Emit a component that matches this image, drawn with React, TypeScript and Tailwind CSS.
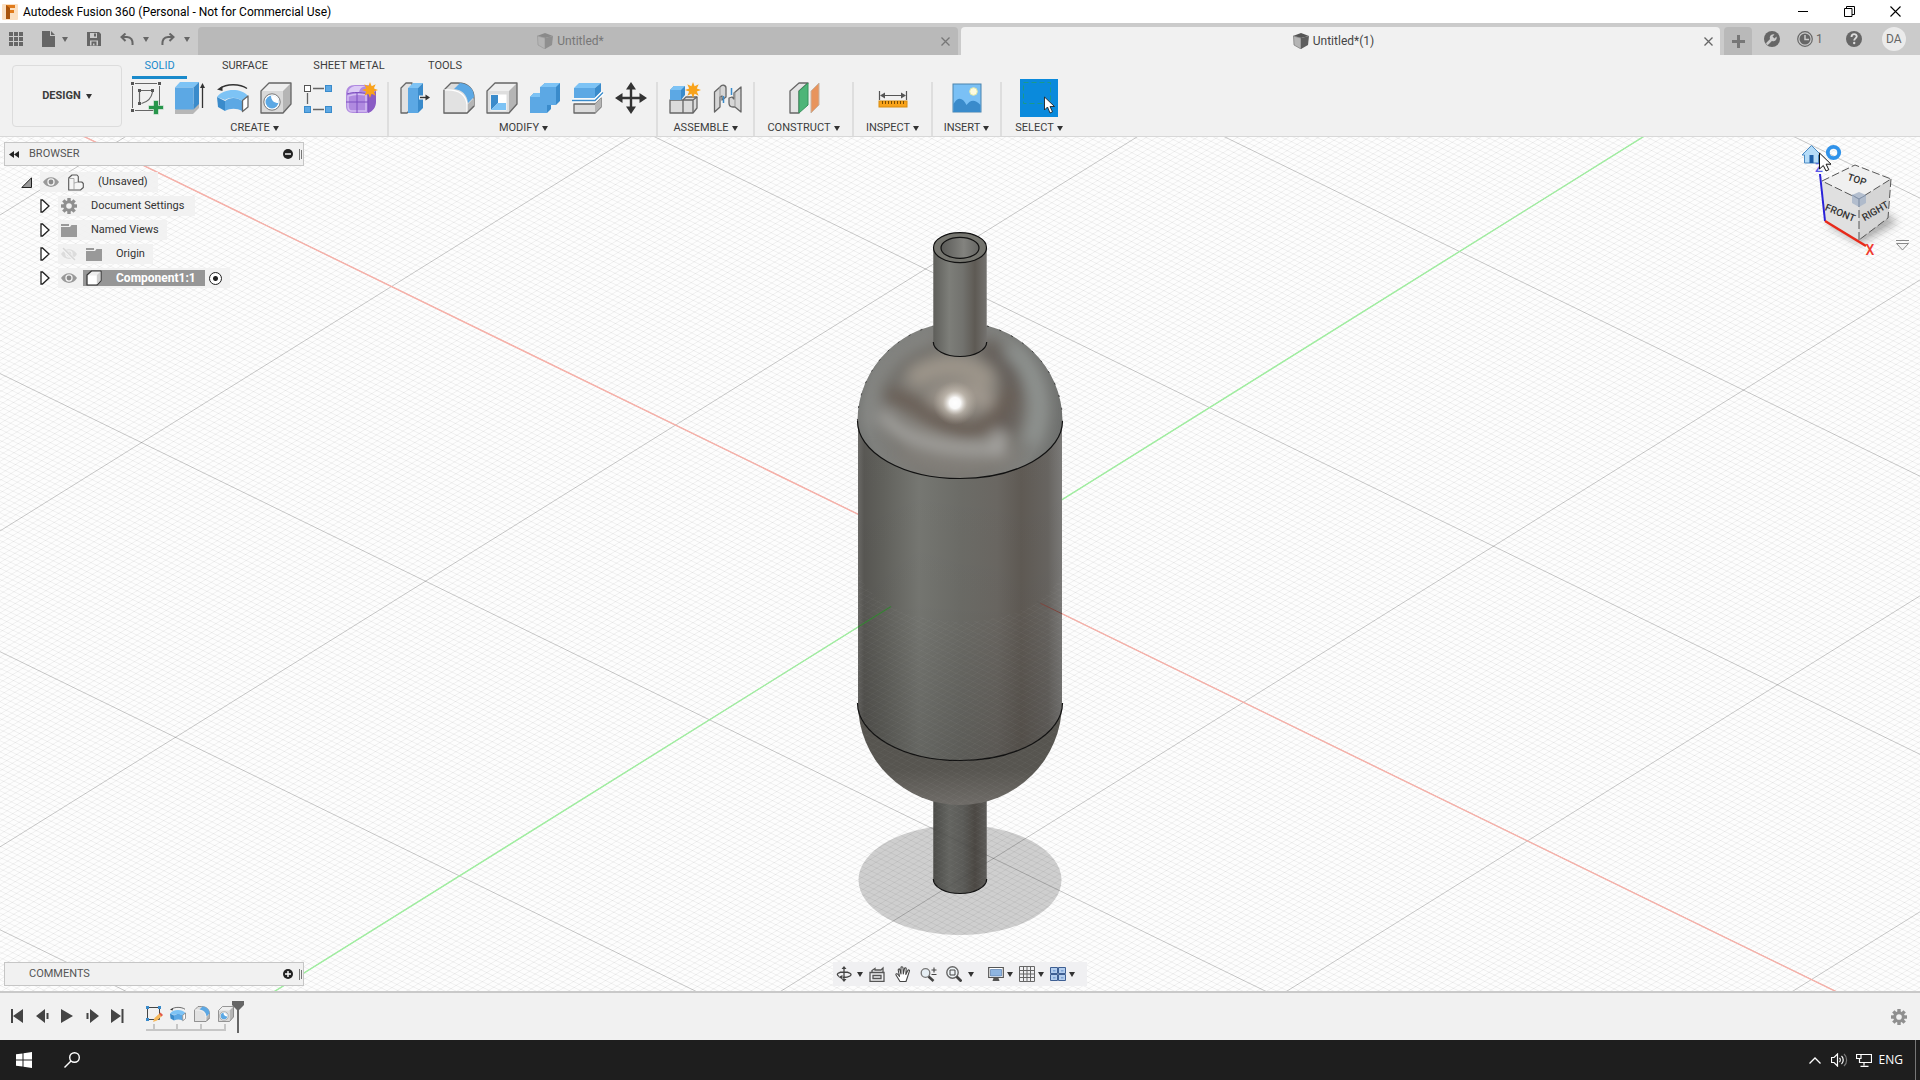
import React, { useState } from 'react';

// Ground grid: origin and the two axis vectors of one major cell
const ORIGIN = { x: 959.5, y: 563.7 };
const RED = { x: 284, y: 138.6 };
const GREEN = { x: 250, y: -156.1 };
const REACH = 7;

const gridPath = (step: number) => {
  let d = '';
  const n = Math.round(REACH / step);
  for (let k = -n; k <= n; k++) {
    const t = k * step;
    const rx = ORIGIN.x + t * RED.x;
    const ry = ORIGIN.y + t * RED.y;
    d += `M${(rx - REACH * GREEN.x).toFixed(1)} ${(ry - REACH * GREEN.y).toFixed(1)}L${(rx + REACH * GREEN.x).toFixed(1)} ${(ry + REACH * GREEN.y).toFixed(1)}`;
    const gx = ORIGIN.x + t * GREEN.x;
    const gy = ORIGIN.y + t * GREEN.y;
    d += `M${(gx - REACH * RED.x).toFixed(1)} ${(gy - REACH * RED.y).toFixed(1)}L${(gx + REACH * RED.x).toFixed(1)} ${(gy + REACH * RED.y).toFixed(1)}`;
  }
  return d;
};

const minorGrid = gridPath(0.02);
const majorGrid = gridPath(1);

const Caret = ({ className = 'text-[#333]' }: { className?: string }) => (
  <svg className={`w-[6px] h-[5px] shrink-0 ${className}`} viewBox="0 0 6 5" fill="currentColor">
    <path d="M0 0h6L3 5z" />
  </svg>
);

/* ---------- ribbon icons, all on a 32px grid ---------- */

const outline = { stroke: '#666', strokeWidth: 1.3, strokeLinejoin: 'round' as const };

const SketchIcon = () => (
  <>
    <rect x="1.500" y="1.500" width="27" height="27" fill="none" stroke="#666" strokeDasharray="22 5" strokeDashoffset="-2.500" />
    <g fill="#555">
      <rect x="0" y="0" width="3" height="3" /><rect x="27" y="0" width="3" height="3" /><rect x="0" y="27" width="3" height="3" />
      <rect x="7" y="7" width="3" height="3" /><rect x="20" y="7" width="3" height="3" /><rect x="7" y="20" width="3" height="3" />
    </g>
    <path d="M10 8.500h10M8.500 10v10M21.500 10c-1 6-5 10-11 11.500" fill="none" stroke="#666" strokeWidth="1.200" />
    <path d="M22.500 18.500h5v5h5v4h-5v5h-5v-5h-5v-4h5z" fill="#27964b" stroke="#f1f1f1" strokeWidth=".6" />
  </>
);

const ExtrudeIcon = () => (
  <>
    <path d="M1 28l6-6h18v4l-6 6H1z" fill="#b7b7b7" />
    <path d="M1 5.500L6 0h19l-5.500 5.500z" fill="#7dc3f5" />
    <path d="M19.500 5.500L25 0v22l-5.500 5.500z" fill="#3a8bcb" />
    <path d="M1 5.500h18.500v22H1z" fill="#5ca8e4" />
    <path d="M28.500 26V4" stroke="#333" strokeWidth="1.300" />
    <path d="M28.500 1l2.500 5h-5z" fill="#333" />
  </>
);

const RevolveIcon = () => (
  <>
    <path d="M3 6.500C9 1.500 23 1.500 30 6.500" fill="none" stroke="#333" strokeWidth="1.400" />
    <path d="M0 7.500l5.500-3.500v5z" fill="#333" />
    <path d="M0 15C7 6 24 6 31 14l-6 5C20 15 13 15 8 18z" fill="#7dc3f5" />
    <path d="M0 15l8 4v10l-7-4z" fill="#3a8bcb" />
    <path d="M8 19c5-4 12-4 17 0v10c-5-3-12-3-17 0z" fill="#5ca8e4" />
    <path d="M25.500 18.500l5.500-4.500v11l-5.500 4.500z" fill="#fff" {...outline} />
  </>
);

const HoleIcon = () => (
  <>
    <path d="M1 9l8-8h22l-8 8z" fill="#efefef" />
    <path d="M23 9l8-8v21l-8 9z" fill="#b5b5b5" />
    <path d="M1 9h22v22H1z" fill="#d9d9d9" />
    <path d="M1 9l8-8h22v21l-8 9H1z" fill="none" {...outline} />
    <circle cx="12" cy="20" r="8.200" fill="#fff" stroke="#777" />
    <circle cx="12" cy="20" r="6.500" fill="#5ca8e4" />
    <path d="M11 13.500c0 5 3 7.500 7.500 7.500A6.500 6.500 0 0 0 11 13.500z" fill="#fff" />
  </>
);

const PatternIcon = () => (
  <>
    <path d="M10 6.500h11M4.500 11v11M10 27.500h11" stroke="#666" strokeWidth="1.300" />
    <rect x="1.500" y="3.500" width="6" height="6" fill="#fff" stroke="#555" />
    <g fill="#5ca8e4" stroke="#3a8bcb">
      <rect x="22.500" y="3.500" width="6" height="6" /><rect x="1.500" y="24.500" width="6" height="6" /><rect x="22.500" y="24.500" width="6" height="6" />
    </g>
  </>
);

const Spark = ({ x, y }: { x: number; y: number }) => (
  <g transform={`translate(${x} ${y})`} fill="#f9a31a">
    <path d="M0-8l1.600 4.200L5.700-5.700 3.800-1.600 8 0 3.800 1.600 5.700 5.700 1.600 3.800 0 8-1.600 3.800-5.700 5.700-3.800 1.600-8 0-3.800-1.600-5.700-5.700-1.600-3.800z" />
  </g>
);

const FormIcon = () => (
  <>
    <path d="M0 12c0-6 3-9 9-9h12c6 0 8 3 8 8v10c0 6-4 10-9 10H7c-5 0-7-3-7-7z" fill="#b08ae0" />
    <path d="M22 13c5-1 8-3 8-6v13c0 5-3 9-8 11z" fill="#8a5cc4" />
    <path d="M2 11c1-5 4-7 8-7h10c-5 1-6 3-7 6-4 0-8 0-11 2z" fill="#dccaf5" />
    <path d="M2 14c6-2 12-2 18-1v16H6c-3 0-4-2-4-5z" fill="none" stroke="#d4bff2" strokeWidth="1.500" />
    <path d="M0 20h22M11 11v20M22 12v18M1 12c6-2 14-2 21 0" fill="none" stroke="#7d4fc0" />
    <Spark x={24} y={8} />
  </>
);

const PressPullIcon = () => (
  <>
    <path d="M1 6l5-5h6v25l-5 5H1z" fill="#e2e2e2" {...outline} />
    <path d="M8 6l5-5h10l-5 5z" fill="#7dc3f5" />
    <path d="M18 6l5-5v25l-5 5z" fill="#3a8bcb" />
    <path d="M8 6h10v25H8z" fill="#5ca8e4" />
    <path d="M19 15.500h7" stroke="#f1f1f1" strokeWidth="4" />
    <path d="M20 15.500h7" stroke="#333" strokeWidth="1.400" />
    <path d="M30 15.500l-4.500-3v6z" fill="#333" />
  </>
);

const FilletIcon = () => (
  <>
    <path d="M1 8l7-7h7c10 0 16 6 16 15v8l-7 7H1z" fill="#dcdcdc" {...outline} />
    <path d="M24 23l7-7v8l-7 7z" fill="#b5b5b5" />
    <path d="M11 7l6-6c9 1 14 6 14 14l-6 6C24 12 19 8 11 7z" fill="#5ca8e4" />
    <path d="M1 8c14-1 22 3 23 15v8H1z" fill="#e2e2e2" stroke="#fff" strokeWidth="1.200" />
    <path d="M1 8v23h23l7-7" fill="none" {...outline} />
  </>
);

const ShellIcon = () => (
  <>
    <path d="M1 9l8-8h22l-8 8z" fill="#efefef" />
    <path d="M23 9l8-8v21l-8 9z" fill="#b5b5b5" />
    <path d="M1 9h22v22H1z" fill="#dedede" />
    <path d="M1 9l8-8h22v21l-8 9H1z" fill="none" {...outline} />
    <rect x="4.500" y="12.500" width="16" height="16" fill="#fff" />
    <path d="M5 13h7v8l-7 7z" fill="#3a8bcb" />
    <path d="M5 28l7-7h8v7z" fill="#7dc3f5" />
  </>
);

const CombineIcon = () => (
  <>
    <path d="M1 15l4-4h7V5l4-4h15v18l-4 4h-5v4l-4 4H1z" fill="#3a8bcb" />
    <path d="M1 15h10V5h16v18h-9v8H1z" fill="#5ca8e4" />
    <path d="M11 5l5-4h15l-4 4zM1 15l4-4h6v4z" fill="#7dc3f5" />
  </>
);

const SplitIcon = () => (
  <>
    <path d="M2 6l5-5h22l-6 5z" fill="#7dc3f5" />
    <path d="M23 6l6-5v9l-6 6z" fill="#3a8bcb" />
    <path d="M2 6h21v10H2z" fill="#5ca8e4" />
    <path d="M2 22h21l6-6v9l-6 6H2z" fill="#dcdcdc" {...outline} />
    <path d="M23 22l6-6v9l-6 6z" fill="#b5b5b5" />
    <path d="M0 18.500h23l8-8" fill="none" stroke="#fff" strokeWidth="4" />
    <path d="M0 18.500h23l8-8" fill="none" stroke="#3a8bcb" strokeWidth="1.300" />
  </>
);

const MoveIcon = () => (
  <>
    <path d="M16 4v24M4 16h24" stroke="#333" strokeWidth="2.400" />
    <path d="M16 0l5 7.500H11zM16 32l5-7.500H11zM0 16l7.500-5v10zM32 16l-7.500-5v10z" fill="#333" />
  </>
);

const ComponentIcon = () => (
  <>
    <path d="M2 18h13v13H2zM15 18l3-3h11v11l-4 5H15z" fill="#dcdcdc" {...outline} />
    <path d="M15 18h10l4-3M25 18v13" fill="none" {...outline} />
    <path d="M2 8l4-4h11v9l-4 5H2z" fill="#3a8bcb" />
    <path d="M2 8h11v10H2z" fill="#5ca8e4" />
    <path d="M2 8l4-4h11l-4 4z" fill="#7dc3f5" />
    <Spark x={25} y={8} />
  </>
);

const JointIcon = () => (
  <>
    <path d="M2.500 10L8 5c2-3 6-2 6 1v9l-4 3v-4l-2 1v10l-5.500 5z" fill="#d6d6d6" {...outline} />
    <path d="M8 5v10" stroke="#999" />
    <path d="M29 5v25l-6-5h-2c-3 0-4-1-4-4v-5l3-1 2 2v-6z" fill="#d6d6d6" {...outline} />
    <path d="M23 10v14" stroke="#999" />
    <path d="M19.500 6v7M11.500 14v7" stroke="#3a8bcb" strokeWidth="1.500" />
  </>
);

const PlaneIcon = () => (
  <>
    <path d="M2 9l9-8h9l-9 8v22H2z" fill="#e4e4e4" {...outline} />
    <path d="M11 9l9-8v22l-9 8z" fill="#4db578" stroke="#37935c" />
    <path d="M23 9l8-8v22l-8 8z" fill="#e8945c" stroke="#c9b29f" />
  </>
);

const MeasureIcon = () => (
  <>
    <path d="M2.500 9v9M29.500 9v9M4 13.500h24" stroke="#555" strokeWidth="1.200" />
    <path d="M3 13.500l5-3v6zM29 13.500l-5-3v6z" fill="#555" />
    <rect x="2" y="19" width="28" height="6" fill="#f9a31a" stroke="#d88b0d" />
    <path d="M5.500 19v3M8.500 19v3M11.500 19v3M14.500 19v3M17.500 19v3M20.500 19v3M23.500 19v3M26.500 19v3" stroke="#7a4c00" />
  </>
);

const InsertIcon = () => (
  <>
    <rect x="2" y="2" width="28" height="28" fill="#7ac0f5" stroke="#4b84ae" />
    <path d="M2.500 22c4-7 9-7 13 1 4-5 8-6 14 0v7h-27z" fill="#3a8bcb" />
    <circle cx="22.500" cy="9.500" r="3.800" fill="#fdfbe0" stroke="#e4e9a8" />
  </>
);

const Icon32 = ({ children }: { children: React.ReactNode }) => (
  <svg className="w-8 h-8 overflow-visible" viewBox="0 0 32 32">{children}</svg>
);

const groups = [
  { label: 'CREATE', width: 'w-[267px]', icons: [SketchIcon, ExtrudeIcon, RevolveIcon, HoleIcon, PatternIcon, FormIcon] },
  { label: 'MODIFY', width: 'w-[269px] pl-[2px]', icons: [PressPullIcon, FilletIcon, ShellIcon, CombineIcon, SplitIcon, MoveIcon] },
  { label: 'ASSEMBLE', width: 'w-[97px]', icons: [ComponentIcon, JointIcon] },
  { label: 'CONSTRUCT', width: 'w-[99px]', icons: [PlaneIcon] },
  { label: 'INSPECT', width: 'w-[79px]', icons: [MeasureIcon] },
  { label: 'INSERT', width: 'w-[69px]', icons: [InsertIcon] },
];

const TitleBar = () => (
  <header className="h-[23px] bg-white flex items-center pl-[2px] text-black shrink-0">
    <svg className="w-4 h-4 mr-[5px]" viewBox="0 0 16 16">
      <rect width="16" height="16" rx="1" fill="#fbe0c2" />
      <path d="M4 1h9v3H8v2h4v3H8v6H4z" fill="#e07b1c" />
      <path d="M4 1l4 3v11H4z" fill="#a9540c" />
    </svg>
    <h1 className="text-xs leading-4">Autodesk Fusion 360 (Personal - Not for Commercial Use)</h1>
    <div className="ml-auto flex items-center gap-[35px] pr-[19px]">
      <button aria-label="Minimize"><svg className="w-[11px] h-[11px]" viewBox="0 0 11 11"><path d="M0 5.500h10" stroke="#000" /></svg></button>
      <button aria-label="Restore"><svg className="w-[11px] h-[11px]" viewBox="0 0 11 11" fill="none" stroke="#000"><path d="M.5 2.500h7.500v8H.5zM2.500 2.500v-2h8v8H8" /></svg></button>
      <button aria-label="Close"><svg className="w-[11px] h-[11px]" viewBox="0 0 11 11"><path d="M.5.5l10 10M10.500.5l-10 10" stroke="#000" strokeWidth="1.100" /></svg></button>
    </div>
  </header>
);

const TabCube = ({ dark }: { dark?: boolean }) => (
  <svg className="w-4 h-4" viewBox="0 0 16 16">
    <path d="M0 3l8-3 8 3-8 2z" fill={dark ? '#555' : '#8a8a8a'} />
    <path d="M.5 3L8 5v11l-7-4z" fill={dark ? '#b5b5b5' : '#b4b4b4'} stroke={dark ? '#777' : '#999'} strokeWidth=".7" />
    <path d="M16 3L8 5v11l7-4z" fill={dark ? '#5e5e5e' : '#8f8f8f'} />
  </svg>
);

const CloseX = () => (
  <svg className="w-[9px] h-[9px]" viewBox="0 0 9 9"><path d="M.5.500l8 8M8.500.500l-8 8" stroke="currentColor" strokeWidth="1.300" /></svg>
);

const TabBar = () => (
  <div className="h-8 bg-[#cbcbcb] flex items-end text-[#666] shrink-0">
    <div className="w-[198px] h-8 flex items-center pl-[9px] shrink-0">
      <button aria-label="Data panel">
        <svg className="w-[14px] h-[14px]" viewBox="0 0 14 14" fill="#666">
          {[0, 5, 10].map(y => [0, 5, 10].map(x => <rect key={`${x}-${y}`} x={x} y={y} width="4" height="4" />))}
        </svg>
      </button>
      <button aria-label="File" className="ml-[19px] flex items-center gap-[7px]">
        <svg className="w-[13px] h-4" viewBox="0 0 13 16" fill="#666"><path d="M0 0h8v5h5v11H0zM9 0l4 4H9z" /></svg>
        <Caret className="text-[#666]" />
      </button>
      <button aria-label="Save" className="ml-[19px]">
        <svg className="w-[14px] h-[14px]" viewBox="0 0 14 14"><path d="M0 0h12l2 2v12H0z" fill="#666" /><path d="M3 1h7v5H3zM3 8.500h8v5H3z" fill="#cbcbcb" /><path d="M7 1.500h2v3H7zM4.500 9.500h5v4h-2v-2h-1.500v2h-1.500z" fill="#666" /></svg>
      </button>
      <button aria-label="Undo" className="ml-[19px] flex items-center gap-[9px]">
        <svg className="w-[14px] h-3" viewBox="0 0 14 12" fill="none" stroke="#666" strokeWidth="2"><path d="M5.500.500L1.500 4l4 4M1.500 4H7c4 0 6 3 5.500 8" /></svg>
        <Caret className="text-[#666]" />
      </button>
      <button aria-label="Redo" className="ml-[12px] flex items-center gap-[9px]">
        <svg className="w-[14px] h-3" viewBox="0 0 14 12" fill="none" stroke="#666" strokeWidth="2"><path d="M8.500.500l4 3.500-4 4M12.500 4H7C3 4 1 7 1.500 12" /></svg>
        <Caret className="text-[#666]" />
      </button>
    </div>
    <div className="h-7 flex-1 bg-[#b9b9b9] rounded-t flex items-center text-[#777] text-xs px-2">
      <span className="flex-1 flex items-center justify-center gap-1 pr-[6px] leading-4"><TabCube />Untitled*</span>
      <button aria-label="Close Untitled" className="text-[#777]"><CloseX /></button>
    </div>
    <div className="h-7 flex-1 ml-[3px] bg-[#f1f1f1] rounded-t flex items-center text-[#444] text-xs pl-2 pr-[7px]">
      <span className="flex-1 flex items-center justify-center gap-1 pr-[6px] leading-4"><TabCube dark />Untitled*(1)</span>
      <button aria-label="Close Untitled (1)" className="text-[#666]"><CloseX /></button>
    </div>
    <button aria-label="New tab" className="w-7 h-7 ml-1 bg-[#b9b9b9] rounded-t flex items-center justify-center">
      <svg className="w-[13px] h-[13px]" viewBox="0 0 13 13"><path d="M6.500 0v13M0 6.500h13" stroke="#777" strokeWidth="3" /></svg>
    </button>
    <div className="w-[168px] h-8 flex items-center pl-3 shrink-0">
      <button aria-label="Extensions">
        <svg className="w-4 h-4" viewBox="0 0 16 16"><circle cx="8" cy="8" r="8" fill="#666" /><path d="M3.500 12.500L8 8" stroke="#cbcbcb" strokeWidth="2.600" strokeLinecap="round" /><path d="M12.500 5.500L10.500 7.500 8.500 5.500l2-2a3.500 3.500 0 1 0 2 2z" fill="#cbcbcb" /></svg>
      </button>
      <button aria-label="Job status" className="ml-[17px] flex items-center gap-[3px] text-xs leading-4">
        <svg className="w-4 h-4" viewBox="0 0 16 16"><circle cx="8" cy="8" r="7.300" fill="none" stroke="#666" strokeWidth="1.200" /><circle cx="8" cy="8" r="5.500" fill="#666" /><path d="M8 4v4.500h4" fill="none" stroke="#cbcbcb" strokeWidth="1.500" /></svg>
        1
      </button>
      <button aria-label="Help" className="ml-[23px]">
        <svg className="w-4 h-4" viewBox="0 0 16 16"><circle cx="8" cy="8" r="8" fill="#666" /><path d="M5.500 6c0-4 5.500-3.500 5.200-.5C10.500 7.300 8.200 7.500 8.200 9.500" fill="none" stroke="#dcdcdc" strokeWidth="1.900" /><circle cx="8.200" cy="12" r="1.200" fill="#dcdcdc" /></svg>
      </button>
      <button className="ml-5 w-6 h-6 rounded-full bg-[#ebebeb] text-xs text-[#666]">DA</button>
    </div>
  </div>
);

const Ribbon = () => {
  const [tab, setTab] = useState('SOLID');
  const tabs = [
    { name: 'SOLID', cls: 'w-[55px]' },
    { name: 'SURFACE', cls: 'w-[68px] ml-6' },
    { name: 'SHEET METAL', cls: 'w-[92px] ml-6' },
    { name: 'TOOLS', cls: 'w-[58px] ml-[21px]' },
  ];
  return (
    <div className="h-[82px] bg-[#f1f1f1] border-b border-[#d8d8d8] flex text-[#3c3c3c] text-[11px] leading-4 shrink-0">
      <button className="w-[110px] h-[62px] ml-3 mt-[10px] border border-[#dcdcdc] rounded flex items-center justify-center gap-[5px] font-bold">
        DESIGN <Caret />
      </button>
      <div className="flex-1">
        <nav className="flex items-start h-6 pl-[10px]">
          {tabs.map(t => (
            <button
              key={t.name}
              onClick={() => setTab(t.name)}
              className={`${t.cls} h-6 pt-[3px] flex justify-center ${tab === t.name ? 'text-[#1a8acb] border-b-[3px] border-[#1a8acb]' : ''}`}
            >
              {t.name}
            </button>
          ))}
        </nav>
        <div className="flex h-[54px] mt-[3px]">
          {groups.map((g, i) => (
            <div key={g.label} className={`${g.width} flex flex-col items-center border-r-2 border-[#dedede]`}>
              <div className={`flex h-8 ${i === 2 ? 'gap-3' : 'gap-[11px]'}`}>
                {g.icons.map((I, k) => (
                  <button key={k} aria-label={`${g.label} ${k + 1}`}><Icon32><I /></Icon32></button>
                ))}
              </div>
              <button className="flex items-center gap-[3px] mt-[6px]">{g.label} <Caret /></button>
            </div>
          ))}
          <div className="w-[74px] flex flex-col items-center">
            <button aria-label="Select tool" className="-mt-[3px] w-[38px] h-[38px] bg-[#0a8adc]">
              <svg className="w-[38px] h-[38px]" viewBox="0 0 38 38">
                <rect x="3.500" y="3.500" width="27" height="21" fill="none" stroke="#1a9a8a" strokeDasharray="5 3" />
                <path d="M24.500 18v13l3-3 2.500 6 2.500-1.200-2.500-5.300h4.500z" fill="#fff" stroke="#222" strokeWidth=".9" />
              </svg>
            </button>
            <button className="flex items-center gap-[3px] mt-[3px]">SELECT <Caret /></button>
          </div>
        </div>
      </div>
    </div>
  );
};

const Model = () => (
  <svg className="absolute inset-0 w-full h-full" viewBox="0 137 1920 854" preserveAspectRatio="xMidYMid slice">
    <defs>
      <linearGradient id="body">
        <stop offset="0" stopColor="#6b6a67" />
        <stop offset=".03" stopColor="#595854" />
        <stop offset=".12" stopColor="#62625d" />
        <stop offset=".3" stopColor="#777873" />
        <stop offset=".5" stopColor="#6d6d68" />
        <stop offset=".68" stopColor="#6b6863" />
        <stop offset=".8" stopColor="#605b55" />
        <stop offset=".93" stopColor="#686561" />
        <stop offset="1" stopColor="#7c7b79" />
      </linearGradient>
      <linearGradient id="tube">
        <stop offset="0" stopColor="#5e5e5a" />
        <stop offset=".3" stopColor="#7d7e79" />
        <stop offset=".55" stopColor="#72726e" />
        <stop offset=".78" stopColor="#5e5a54" />
        <stop offset="1" stopColor="#74726f" />
      </linearGradient>
      <linearGradient id="bore">
        <stop offset="0" stopColor="#5a5a57" />
        <stop offset=".6" stopColor="#83837f" />
        <stop offset="1" stopColor="#666663" />
      </linearGradient>
      <linearGradient id="shade" x1="0" y1="0" x2="0" y2="1">
        <stop offset="0" stopColor="#000" stopOpacity="0" />
        <stop offset=".55" stopColor="#000" stopOpacity=".03" />
        <stop offset="1" stopColor="#000" stopOpacity=".16" />
      </linearGradient>
      <linearGradient id="bowl" x1="0" y1="0" x2="0" y2="1">
        <stop offset="0" stopColor="#56544f" />
        <stop offset=".65" stopColor="#575550" />
        <stop offset="1" stopColor="#6f6c68" />
      </linearGradient>
      <radialGradient id="dome" gradientUnits="userSpaceOnUse" cx="955" cy="410" r="110">
        <stop offset="0" stopColor="#8d877f" />
        <stop offset=".6" stopColor="#7b7974" />
        <stop offset=".8" stopColor="#7f807d" />
        <stop offset="1" stopColor="#6b6d6b" />
      </radialGradient>
      <radialGradient id="glint">
        <stop offset="0" stopColor="#fff" />
        <stop offset=".25" stopColor="#fff" stopOpacity=".95" />
        <stop offset=".55" stopColor="#e6dfd4" stopOpacity=".4" />
        <stop offset="1" stopColor="#c9bfb2" stopOpacity="0" />
      </radialGradient>
      <filter id="soft" x="-50%" y="-50%" width="200%" height="200%"><feGaussianBlur stdDeviation="7" /></filter>
      <clipPath id="domeClip"><path d="M857.500 421A102.500 99 0 0 1 1062.500 421A102.500 57.500 0 0 1 857.500 421z" /></clipPath>
      <clipPath id="frontClip">
        <path d="M858 564A102 57.500 0 0 0 1062 564V703A102 102 0 0 1 987 802V879A26.700 15 0 0 1 933 879V802A102 102 0 0 1 858 703z" />
      </clipPath>
    </defs>

    <rect y="137" width="1920" height="854" fill="#fdfdfd" />
    <ellipse cx="960" cy="880" rx="101.500" ry="55" fill="#cfcfcf" />
    <path d={minorGrid} stroke="#000" strokeOpacity=".07" strokeWidth=".8" />
    <path d={majorGrid} stroke="#000" strokeOpacity=".17" strokeWidth="1" />
    <path d="M-24.500 83.500L1943.500 1044" stroke="#f7b0a8" strokeWidth="1.400" />
    <path d="M209.500 1032L1709.500 95.400" stroke="#9fee9f" strokeWidth="1.400" />

    {/* lower tube, bowl, barrel */}
    <path d="M933.300 790V879A26.700 14.500 0 0 0 986.700 879V790z" fill="url(#tube)" />
    <path d="M933.300 790V879A26.700 14.500 0 0 0 986.700 879V790z" fill="#000" fillOpacity=".2" />
    <path d="M933.300 879A26.700 14.500 0 0 0 986.700 879" fill="none" stroke="#111" strokeWidth="1.200" />
    <path d="M858 703A102 102 0 0 0 1062 703z" fill="url(#bowl)" />
    <path d="M858 421V703A102 57.500 0 0 0 1062 703V421z" fill="url(#body)" />
    <path d="M858 421V703A102 57.500 0 0 0 1062 703V421z" fill="url(#shade)" />
    <path d="M857.500 703A102.500 57.500 0 0 0 1062.500 703" fill="none" stroke="#111" strokeWidth="1.200" />

    {/* dome with soft reflections */}
    <g clipPath="url(#domeClip)">
      <rect x="850" y="310" width="220" height="175" fill="url(#dome)" />
      <g filter="url(#soft)" fill="none" strokeLinecap="round">
        <path d="M868 425C868 385 890 352 930 338" stroke="#8a8b88" strokeWidth="8" />
        <path d="M884 392C894 368 912 354 935 348" stroke="#716e69" strokeWidth="10" />
        <path d="M988 350C1010 362 1018 388 1008 425" stroke="#66615b" strokeWidth="20" />
        <path d="M1012 352C1036 372 1046 405 1032 438" stroke="#909492" strokeWidth="14" />
        <path d="M894 396C915 400 930 424 968 430C985 430 1000 415 1008 395" stroke="#695f56" strokeWidth="17" />
        <path d="M918 376C938 364 965 362 984 378" stroke="#9d958a" strokeWidth="20" />
        <path d="M884 416C900 438 940 452 996 448" stroke="#a6a5a2" strokeWidth="11" />
        <path d="M905 455C945 468 985 468 1015 456" stroke="#84807a" strokeWidth="9" />
        <path d="M999 436V450" stroke="#aaa9a6" strokeWidth="11" />
        <path d="M940 398C955 390 975 392 985 400" stroke="#a0988e" strokeWidth="18" />
      </g>
      <circle cx="955" cy="403" r="22" fill="url(#glint)" />
    </g>
    <path d="M857.500 421A102.500 57.500 0 0 0 1062.500 421" fill="none" stroke="#111" strokeWidth="1.200" />
    <path d="M857.500 421A102.500 99 0 0 1 933 326M987 326A102.500 99 0 0 1 1062.500 421" fill="none" stroke="#222" strokeWidth=".8" strokeDasharray="2 11" />

    {/* upper tube */}
    <path d="M933.300 248V342A26.700 14.500 0 0 0 986.700 342V248z" fill="url(#tube)" />
    <path d="M933.300 342A26.700 14.500 0 0 0 986.700 342" fill="none" stroke="#111" strokeWidth="1.200" />
    <ellipse cx="960" cy="247.700" rx="26.500" ry="15" fill="#75756f" stroke="#111" strokeWidth="1.200" />
    <ellipse cx="960" cy="247.900" rx="19" ry="10.500" fill="url(#bore)" stroke="#111" strokeWidth="1.200" />

    {/* ground plane in front of the solid */}
    <g clipPath="url(#frontClip)">
      <path d={minorGrid} stroke="#fff" strokeOpacity=".035" strokeWidth="1" />
      <path d="M1040.500 603.300L1943.500 1044" stroke="#8a4d45" />
      <path d="M891 606.500L209.500 1032" stroke="#3d8a3a" strokeWidth="1.300" />
      <path d={majorGrid} stroke="#000" strokeOpacity=".1" />
    </g>
  </svg>
);

const ViewCube = () => (
  <svg className="absolute right-0 top-0 w-[130px] h-[124px]" viewBox="1790 137 130 124">
    <defs>
      <filter id="cubeShadow" x="-30%" y="-30%" width="160%" height="160%"><feGaussianBlur stdDeviation="4" /></filter>
    </defs>
    <path d="M1826 224l34 20 38-22-20-14z" fill="#777" fillOpacity=".6" filter="url(#cubeShadow)" />
    <path d="M1822 181l33-16 36 14-32 20z" fill="#f0f0f0" />
    <path d="M1822 181l37 18v41l-34-19z" fill="#e0e0e0" />
    <path d="M1891 179l-32 20v41l29-22z" fill="#d5d5d5" />
    <path d="M1822 181l33-16 36 14-32 20zM1859 199v41M1891 179l-3 39-29 22" fill="none" stroke="#555" strokeDasharray="8 3" />
    <path d="M1852 195l7-3 7 3v8l-7 4-7-4z" fill="#a9b6c9" fillOpacity=".85" />
    <path d="M1852 195l7 4 7-4M1859 199v8" fill="none" stroke="#8393aa" />
    <g fontFamily="Roboto, sans-serif" fontSize="10" fontWeight="500" fill="#333" textAnchor="middle">
      <text transform="translate(1856 183) rotate(18)">TOP</text>
      <text transform="translate(1839 216) rotate(22)">FRONT</text>
      <text transform="translate(1877 214) rotate(-30)">RIGHT</text>
      <text x="1870" y="255" fontSize="14" fill="#f03a2e">X</text>
      <text x="1819" y="172" fontSize="13" fill="#5a5ae8">Z</text>
    </g>
    <path d="M1820 174l5 47" stroke="#2a22d8" strokeWidth="2" />
    <path d="M1825 221l41 25" stroke="#e82a1a" strokeWidth="2.500" />
    <path d="M1802 155l9.500-9.500 9.500 9.500h-2.500v8h-14v-8z" fill="#b5dcf8" stroke="#4a8ac4" />
    <path d="M1809.500 155h4v8h-4z" fill="#1d5fa8" />
    <circle cx="1833.500" cy="152.500" r="5.700" fill="none" stroke="#2f92ea" strokeWidth="3.800" />
    <path d="M1819.500 153v16l3.800-3.500 2.700 5.500 2.800-1.300-2.700-5.500h4.900z" fill="#fff" stroke="#111" />
    <path d="M1896 240.500h13M1896.500 243.500h12l-6 6.500z" fill="#f3f3f3" stroke="#888" />
  </svg>
);

const Eye = ({ off }: { off?: boolean }) => (
  <svg className="w-4 h-[14px]" viewBox="0 0 16 14">
    <path d="M0 7c4-6.500 12-6.500 16 0-4 6.500-12 6.500-16 0z" fill={off ? '#dcdcdc' : '#999'} />
    <circle cx="8" cy="7" r="3.700" fill="#f1f1f1" />
    <circle cx="8" cy="7" r="2.400" fill={off ? '#dcdcdc' : '#8b8b8b'} />
    {off && <path d="M1 1l13 12" stroke="#f4f4f4" strokeWidth="3" />}
    {off && <path d="M2 1l12 12" stroke="#d6d6d6" strokeWidth="1.500" />}
  </svg>
);

const Gear = () => (
  <svg className="w-4 h-4" viewBox="0 0 16 16">
    <g fill="#8f8f8f">
      {[0, 45, 90, 135].map(a => <rect key={a} x="6.300" y="0" width="3.400" height="16" transform={`rotate(${a} 8 8)`} />)}
      <circle cx="8" cy="8" r="5.800" />
    </g>
    <circle cx="8" cy="8" r="2.800" fill="#f1f1f1" />
  </svg>
);

const Folder = () => (
  <svg className="w-4 h-[13px]" viewBox="0 0 16 13" fill="#999"><path d="M0 0h8v2H0zM0 3h9l1.500-2H16v12H0z" /></svg>
);

const Expander = () => (
  <button aria-label="Expand" className="w-[10px] mr-2">
    <svg className="w-[10px] h-[14px]" viewBox="0 0 10 14"><path d="M1 1h1.500l6.500 6-6.500 6H1z" fill="#fff" stroke="#222" strokeWidth="1.300" /></svg>
  </button>
);

const AssemblyIcon = () => (
  <svg className="w-4 h-[17px]" viewBox="0 0 16 17" fill="#f6f6f6" stroke="#555" strokeWidth="1.100" strokeLinejoin="round">
    <path d="M.7 4L4 1h5l1.300 1.500V8h3.500l1.500 1.500v4L12.500 16H.7z" />
    <path d="M6 9v7M6 9l4-1M.7 4.500H6V9" stroke="#999" strokeWidth=".8" />
  </svg>
);

const BodyIcon = () => (
  <svg className="w-4 h-4" viewBox="0 0 16 16" strokeLinejoin="round">
    <path d="M1 5l4.500-4H15v9.500L11 15H1z" fill="#eee" stroke="#333" strokeWidth="1.200" />
    <path d="M2 5.500h8.500V14H2z" fill="#fff" />
    <path d="M11 5l3.500-3.500v9L11 14.500z" fill="#cfcfcf" />
  </svg>
);

const PanelBar = ({ title, open }: { title: string; open?: boolean }) => (
  <div className="w-[300px] h-6 bg-[#f1f1f1] border border-[#c6c6c6] flex items-center pl-1 text-[#555]">
    <span className="w-5 shrink-0">
      {open && <svg className="w-[10px] h-[7px]" viewBox="0 0 10 7" fill="#222"><path d="M5 0v7L0 3.500zM10 0v7L5 3.500z" /></svg>}
    </span>
    <span>{title}</span>
    <button aria-label={open ? `Hide ${title}` : `Show ${title}`} className="ml-auto mr-[6px]">
      <svg className="w-[10px] h-[10px]" viewBox="0 0 10 10"><circle cx="5" cy="5" r="5" fill="#222" /><path d={open ? 'M2 5h6' : 'M2 5h6M5 2v6'} stroke="#fff" strokeWidth="1.400" /></svg>
    </button>
    <svg className="w-[3px] h-[11px] mr-[1px]" viewBox="0 0 3 11"><path d="M.5 0v11M2.500 1v9" stroke="#777" /></svg>
  </div>
);

const Browser = () => (
  <aside className="text-[11px] leading-4 text-[#333]">
    <PanelBar title="BROWSER" open />
    <ul className="pt-1">
      <li className="h-6 flex items-center pl-[17px]">
        <button aria-label="Collapse" className="mr-2">
          <svg className="w-[11px] h-[11px]" viewBox="0 0 11 11"><path d="M10.500.8v9.700H.8z" fill="#999" stroke="#222" /></svg>
        </button>
        <span className="h-5 bg-[#f1f1f1]/90 flex items-center pl-[3px] pr-[10px]"><Eye /><span className="w-[9px]" /><AssemblyIcon /><span className="ml-[14px]">(Unsaved)</span></span>
      </li>
      <li className="h-6 flex items-center pl-9">
        <Expander />
        <span className="h-5 bg-[#f1f1f1]/90 flex items-center pl-[3px] pr-[11px] gap-[14px]"><Gear />Document Settings</span>
      </li>
      <li className="h-6 flex items-center pl-9">
        <Expander />
        <span className="h-5 bg-[#f1f1f1]/90 flex items-center pl-[3px] pr-2 gap-[14px]"><Folder />Named Views</span>
      </li>
      <li className="h-6 flex items-center pl-9">
        <Expander />
        <span className="h-5 bg-[#f1f1f1]/90 flex items-center pl-[3px] pr-2"><Eye off /><span className="w-[9px]" /><Folder /><span className="ml-[14px]">Origin</span></span>
      </li>
      <li className="h-6 flex items-center pl-9">
        <Expander />
        <span className="h-5 bg-[#f1f1f1]/90 flex items-center pl-[3px] pr-2">
          <Eye />
          <span className="h-4 bg-[#969696] flex items-center ml-[6px] pl-[3px] pr-[9px] text-white text-xs leading-4 font-bold gap-[14px]"><BodyIcon />Component1:1</span>
          <input type="radio" defaultChecked aria-label="Activate Component1:1" className="appearance-none ml-1 w-[13px] h-[13px] rounded-full border border-[#222] bg-[radial-gradient(#222_2px,#fff_3px)]" />
        </span>
      </li>
    </ul>
  </aside>
);

const NavBar = () => (
  <div className="h-6 bg-[#f0f0f2] flex items-center px-[3px]">
    <button aria-label="Orbit" className="flex items-center gap-[5px]">
      <svg className="w-4 h-4" viewBox="0 0 16 16" fill="none" stroke="#444"><path d="M8 1v14M3 10.500C-1 8 3 6 8 6s9 2 6 4c-1.500 1-4 1.500-7 1.500" strokeWidth="1.300" /><path d="M8 0l2.500 3h-5zM8 16l2.500-3h-5zM2.500 11l4-2v4.500z" fill="#444" stroke="none" /></svg>
      <Caret />
    </button>
    <button aria-label="Look at" className="ml-[6px]">
      <svg className="w-4 h-4" viewBox="0 0 16 16" fill="none" stroke="#555"><path d="M1 6.500h14v9H1zM4 9.500h8v3H4zM3 6V4.500l3-2v1.500h6L14 2v4" strokeWidth="1.300" /></svg>
    </button>
    <button aria-label="Pan" className="ml-[10px]">
      <svg className="w-4 h-4" viewBox="0 0 16 16" fill="#fff" stroke="#444" strokeWidth="1.100" strokeLinejoin="round"><path d="M5 15.500L1 9c-.5-1.200 1-1.800 2-.5l1.500 1.800L3.200 4c0-1.300 1.300-1.500 1.700-.2L6 8V1.800C6 .3 7.800.3 8 1.800L8.300 8l1.200-5.500c.3-1.200 1.800-1 1.700.3L10.800 8.500l2-4c.6-1.200 2-.6 1.600.6L12.500 11 11 15.500z" /></svg>
    </button>
    <button aria-label="Zoom" className="ml-[9px]">
      <svg className="w-[17px] h-4" viewBox="0 0 17 16" fill="none" stroke="#444"><circle cx="5.500" cy="7" r="4.300" fill="#e6eef4" stroke="#777" strokeWidth="1.300" /><path d="M8.500 10.500l5 4.500" strokeWidth="2.600" /><path d="M11.500 4h5M14 1.500v5M11.500 8.500h5" strokeWidth="1.100" /></svg>
    </button>
    <button aria-label="Fit" className="ml-[9px] flex items-center gap-[6px]">
      <svg className="w-4 h-4" viewBox="0 0 16 16" fill="none" stroke="#444"><circle cx="6.500" cy="6.500" r="5.700" fill="#eef3f6" stroke="#666" strokeWidth="1.400" /><path d="M4 4h5v5H4z" /><path d="M10.500 10.500l5 5" strokeWidth="2.800" /></svg>
      <Caret />
    </button>
    <button aria-label="Display settings" className="ml-[14px] flex items-center gap-[3px]">
      <svg className="w-4 h-4" viewBox="0 0 16 16"><path d="M.7 1.500h14.600v10H.7z" fill="#fff" stroke="#555" strokeWidth="1.200" /><path d="M2.500 3.500h11v6.500h-11z" fill="#8fb6e2" stroke="#5a80b0" strokeWidth=".7" /><path d="M5.500 12h5l1 3h-7z" fill="#555" /></svg>
      <Caret />
    </button>
    <button aria-label="Grid and snaps" className="ml-[6px] flex items-center gap-[3px]">
      <svg className="w-4 h-4" viewBox="0 0 16 16" fill="none" stroke="#666"><path d="M.5.5h15v15H.5zM4.500 0v16M8 0v16M11.500 0v16M0 4.500h16M0 8h16M0 11.500h16" /></svg>
      <Caret />
    </button>
    <button aria-label="Viewports" className="ml-[6px] mr-[9px] flex items-center gap-[3px]">
      <svg className="w-4 h-[14px]" viewBox="0 0 16 14"><path d="M.5.5h7v6h-7zM8.500.5h7v6h-7zM.5 7.500h7v6h-7zM8.500 7.500h7v6h-7z" fill="#b3cdee" stroke="#3e5f93" /><path d="M3 3h2.500v1.500H3zM11 3h2.500v1.500H11zM3 10h2.500v1.500H3zM11 10h2.500v1.500H11z" fill="#7fa3d4" /></svg>
      <Caret />
    </button>
  </div>
);

const SmallIcon = ({ children }: { children: React.ReactNode }) => (
  <svg className="w-4 h-4 overflow-visible" viewBox="0 0 32 32">{children}</svg>
);

const Timeline = () => (
  <footer className="h-[49px] bg-[#f1f1f1] border-t-2 border-[#c9c9c9] flex items-center shrink-0 px-[11px]">
    <div className="flex items-center gap-3 pb-[2px]">
      {[
        ['First', 'M0 0h2v14H0zM12 0v14L2 7z'],
        ['Back', 'M9 0v14L0 7zM10.500 4h2v6h-2z'],
        ['Play', 'M0 0v14l12-7z'],
        ['Forward', 'M4 0v14l9-7zM.5 4h2v6h-2z'],
        ['Last', 'M0 0v14l10-7zM10.500 0h2v14h-2z'],
      ].map(([name, d]) => (
        <button key={name} aria-label={name}><svg className="w-[13px] h-[14px]" viewBox="0 0 13 14" fill="#444"><path d={d} /></svg></button>
      ))}
    </div>
    <div className="ml-[22px] flex items-start pt-[5px]">
      <div>
        <div className="flex gap-2">
          <button aria-label="Sketch1">
            <svg className="w-4 h-4 overflow-visible" viewBox="0 0 16 16"><path d="M1.500 1.500h12v12h-12z" fill="none" stroke="#444" /><g fill="#3a8bcb"><path d="M0 0h3v3H0zM12 0h3v3h-3zM0 12h3v3H0z" /></g><path d="M7 16l1.500-4 5-4.500 2.500 2.500-5 4.500z" fill="#f6b85a" /><path d="M13 8l1.500-1.500L17 9l-1.500 1.500z" fill="#e05a4a" /></svg>
          </button>
          <button aria-label="Revolve1"><SmallIcon><RevolveIcon /></SmallIcon></button>
          <button aria-label="Fillet1"><SmallIcon><FilletIcon /></SmallIcon></button>
          <button aria-label="Hole1"><SmallIcon><HoleIcon /></SmallIcon></button>
        </div>
        <svg className="w-20 h-[7px] mt-[2px]" viewBox="0 0 80 7" fill="none" stroke="#c6c6c6" strokeWidth="2"><path d="M0 6h80M8 0v6M31 0v6M55 0v6M79 0v6" /></svg>
      </div>
      <svg className="w-3 h-8 -mt-[5px] -ml-[2px]" viewBox="0 0 12 32"><path d="M0 0h12v4L7 9v23H5V9L0 4z" fill="#666" /></svg>
    </div>
    <button aria-label="Timeline settings" className="ml-auto mr-[2px]"><Gear /></button>
  </footer>
);

const Taskbar = () => (
  <div className="h-10 bg-[#1e1e1e] text-white flex items-center pl-4 shrink-0">
    <button aria-label="Start"><svg className="w-4 h-4" viewBox="0 0 16 16" fill="#fff"><path d="M0 2.300L6.500 1.400v6.100H0zM7.500 1.200L16 0v7.500H7.500zM0 8.500h6.500v6.100L0 13.700zM7.500 8.500H16V16l-8.500-1.200z" /></svg></button>
    <button aria-label="Search" className="ml-8"><svg className="w-4 h-4" viewBox="0 0 16 16" fill="none" stroke="#fff" strokeWidth="1.400"><circle cx="10.500" cy="5.500" r="4.800" /><path d="M7 9L.5 15.500" /></svg></button>
    <div className="ml-auto flex items-center">
      <svg className="w-3 h-[7px]" viewBox="0 0 12 7" fill="none" stroke="#fff" strokeWidth="1.300"><path d="M.5 6.500L6 1l5.500 5.500" /></svg>
      <svg className="w-[17px] h-[14px] ml-[10px]" viewBox="0 0 17 14" fill="none" stroke="#fff" strokeWidth="1.200"><path d="M.5 4.500H3L6.500 1v12L3 9.500H.5zM8.500 5c1 1 1 3 0 4M10.500 3c2.300 2 2.300 6 0 8" /><path d="M13 1c3.500 3 3.500 9 0 12" stroke="#777" /></svg>
      <svg className="w-4 h-[14px] ml-2" viewBox="0 0 16 14" fill="none" stroke="#fff" strokeWidth="1.200"><path d="M5 1.500h10.500v8H3.500V6M.5 1.500H5v4H.5zM8 9.500v3M4.500 13.300h8" /></svg>
      <span className="ml-[7px] font-['Open_Sans','Noto_Sans',sans-serif] text-xs">ENG</span>
      <span className="ml-3 mr-1 w-px h-10 bg-[#777]" />
    </div>
  </div>
);

export default function App() {
  return (
    <div className="h-screen flex flex-col overflow-hidden font-[Roboto,'Liberation_Sans',sans-serif]">
      <TitleBar />
      <TabBar />
      <Ribbon />
      <main className="relative flex-1 min-h-0 overflow-hidden">
        <Model />
        <ViewCube />
        <div className="relative h-full flex flex-col justify-between px-1 py-[5px]">
          <Browser />
          <div className="grid grid-cols-[1fr_auto_1fr] items-end text-[11px] leading-4">
            <PanelBar title="COMMENTS" />
            <NavBar />
          </div>
        </div>
      </main>
      <Timeline />
      <Taskbar />
    </div>
  );
}
